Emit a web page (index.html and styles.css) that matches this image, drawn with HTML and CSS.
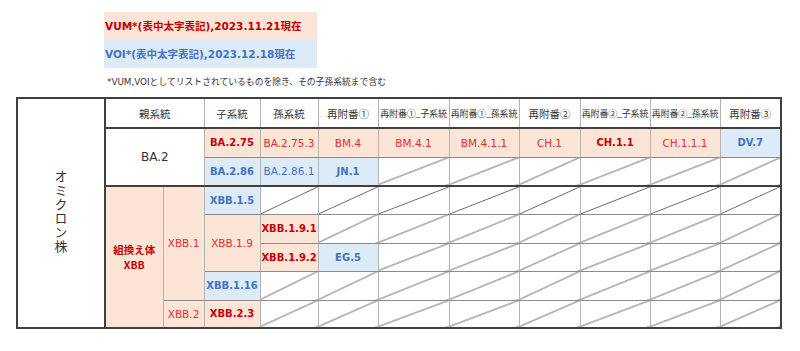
FILE: index.html
```html
<!DOCTYPE html>
<html lang="ja">
<head>
<meta charset="utf-8">
<link rel="stylesheet" href="styles.css">
</head>
<body>
<div class="page">
  <div class="legend">
    <div class="legend-item vum">VUM*(表中太字表記),2023.11.21現在</div>
    <div class="legend-item voi">VOI*(表中太字表記),2023.12.18現在</div>
    <div class="note">*VUM,VOIとしてリストされているものを除き、その子孫系統まで含む</div>
  </div>
  <table class="grid">
    <colgroup>
      <col class="c88"><col class="c58"><col class="c41"><col class="c56"><col class="c58"><col class="c60">
      <col class="c71"><col class="c70"><col class="c61"><col class="c70"><col class="c70"><col class="c61">
    </colgroup>
    <tr class="head">
      <td class="omicron" rowspan="8"><span class="vtext">オミクロン株</span></td>
      <th colspan="2">親系統</th>
      <th>子系統</th>
      <th>孫系統</th>
      <th>再附番①</th>
      <th class="small">再附番①_子系統</th>
      <th class="small">再附番①_孫系統</th>
      <th>再附番②</th>
      <th class="small">再附番②_子系統</th>
      <th class="small">再附番②_孫系統</th>
      <th>再附番③</th>
    </tr>
    <tr class="r29">
      <td class="parent" colspan="2" rowspan="2">BA.2</td>
      <td class="p rb">BA.2.75</td>
      <td class="p r">BA.2.75.3</td>
      <td class="p r">BM.4</td>
      <td class="p r">BM.4.1</td>
      <td class="p r">BM.4.1.1</td>
      <td class="p r">CH.1</td>
      <td class="p rb">CH.1.1</td>
      <td class="p r">CH.1.1.1</td>
      <td class="bl bb">DV.7</td>
    </tr>
    <tr class="r29">
      <td class="bl bb">BA.2.86</td>
      <td class="bl b">BA.2.86.1</td>
      <td class="bl bb">JN.1</td>
      <td class="x"></td><td class="x"></td><td class="x"></td><td class="x"></td><td class="x"></td><td class="x"></td><td class="x"></td>
    </tr>
    <tr class="r28 sec">
      <td class="p rb recomb" rowspan="5">組換え体<br>XBB</td>
      <td class="p r" rowspan="4">XBB.1</td>
      <td class="bl bb">XBB.1.5</td>
      <td class="x"></td><td class="x"></td><td class="x"></td><td class="x"></td><td class="x"></td><td class="x"></td><td class="x"></td><td class="x"></td>
    </tr>
    <tr class="r29">
      <td class="p r" rowspan="2">XBB.1.9</td>
      <td class="p rb">XBB.1.9.1</td>
      <td class="x"></td><td class="x"></td><td class="x"></td><td class="x"></td><td class="x"></td><td class="x"></td><td class="x"></td>
    </tr>
    <tr class="r28">
      <td class="p rb">XBB.1.9.2</td>
      <td class="bl bb">EG.5</td>
      <td class="x"></td><td class="x"></td><td class="x"></td><td class="x"></td><td class="x"></td><td class="x"></td>
    </tr>
    <tr class="r29">
      <td class="bl bb">XBB.1.16</td>
      <td class="x"></td><td class="x"></td><td class="x"></td><td class="x"></td><td class="x"></td><td class="x"></td><td class="x"></td><td class="x"></td>
    </tr>
    <tr class="r28 last">
      <td class="p r">XBB.2</td>
      <td class="p rb">XBB.2.3</td>
      <td class="x"></td><td class="x"></td><td class="x"></td><td class="x"></td><td class="x"></td><td class="x"></td><td class="x"></td><td class="x"></td>
    </tr>
  </table>
</div>
</body>
</html>
```

FILE: styles.css
```css
html, body {
  margin: 0;
  padding: 0;
  background: #ffffff;
}

.page {
  padding: 12px 0 0 16px;
  font-family: "DejaVu Sans", "Noto Sans CJK JP", sans-serif;
  color: #333333;
}

.legend {
  margin-left: 88px;
}

.legend-item {
  width: 212px;
  height: 28px;
  line-height: 28px;
  padding-left: 1px;
  font-size: 10.5px;
  font-weight: bold;
  white-space: nowrap;
}

.vum {
  background: #fce4d6;
  color: #c00000;
}

.voi {
  background: #ddebf7;
  color: #4472c4;
}

.note {
  height: 29px;
  line-height: 29px;
  margin-left: 3px;
  font-size: 8.8px;
  color: #333333;
  white-space: nowrap;
}

.grid {
  border-collapse: collapse;
  table-layout: fixed;
  width: 764px;
  border: 2px solid #404040;
}

.c88 { width: 88px; }
.c58 { width: 58px; }
.c41 { width: 41px; }
.c56 { width: 56px; }
.c60 { width: 60px; }
.c71 { width: 71px; }
.c70 { width: 70px; }
.c61 { width: 61px; }

.grid th,
.grid td {
  padding: 0;
  text-align: center;
  vertical-align: middle;
  white-space: nowrap;
  border-top: 1px solid #8c8c8c;
  border-bottom: 1px solid #8c8c8c;
  border-left: 1px solid #b4b4b4;
  border-right: 1px solid #b4b4b4;
  font-size: 10.5px;
}

.head {
  height: 30px;
}

.r29 { height: 29px; }
.r28 { height: 28px; }

.grid th {
  font-family: "Noto Sans CJK JP", sans-serif;
  font-weight: normal;
  font-size: 10.5px;
  color: #333333;
  border-top: 2px solid #404040;
  border-bottom: 2px solid #404040;
}

.grid th.small {
  font-size: 9px;
  letter-spacing: -0.2px;
}

.grid tr > :last-child {
  border-right: 2px solid #404040;
}

.grid td.omicron {
  border: 2px solid #404040;
  background: #ffffff;
}

.vtext {
  display: inline-block;
  writing-mode: vertical-rl;
  font-family: "Noto Sans CJK JP", sans-serif;
  font-size: 13px;
  letter-spacing: 1px;
  color: #333333;
}

.grid td.parent {
  font-size: 12px;
  color: #333333;
}

.grid .sec td {
  border-top: 2px solid #404040;
}

.grid .last td,
.grid td.recomb {
  border-bottom: 2px solid #404040;
}

.p { background: #fce4d6; }
.bl { background: #ddebf7; }

.grid .rb {
  color: #c80000;
  font-weight: bold;
  font-size: 10px;
}

.grid .r {
  color: #e03030;
}

.grid .bb {
  color: #4472c4;
  font-weight: bold;
  font-size: 10px;
}

.grid .b {
  color: #4472c4;
}

.grid td.recomb {
  font-family: "Noto Sans CJK JP", sans-serif;
  font-size: 10.5px;
  line-height: 15px;
}

.x {
  background: linear-gradient(to bottom right,
    transparent calc(50% - 0.8px),
    #555555 50%,
    transparent calc(50% + 0.8px));
}
```
